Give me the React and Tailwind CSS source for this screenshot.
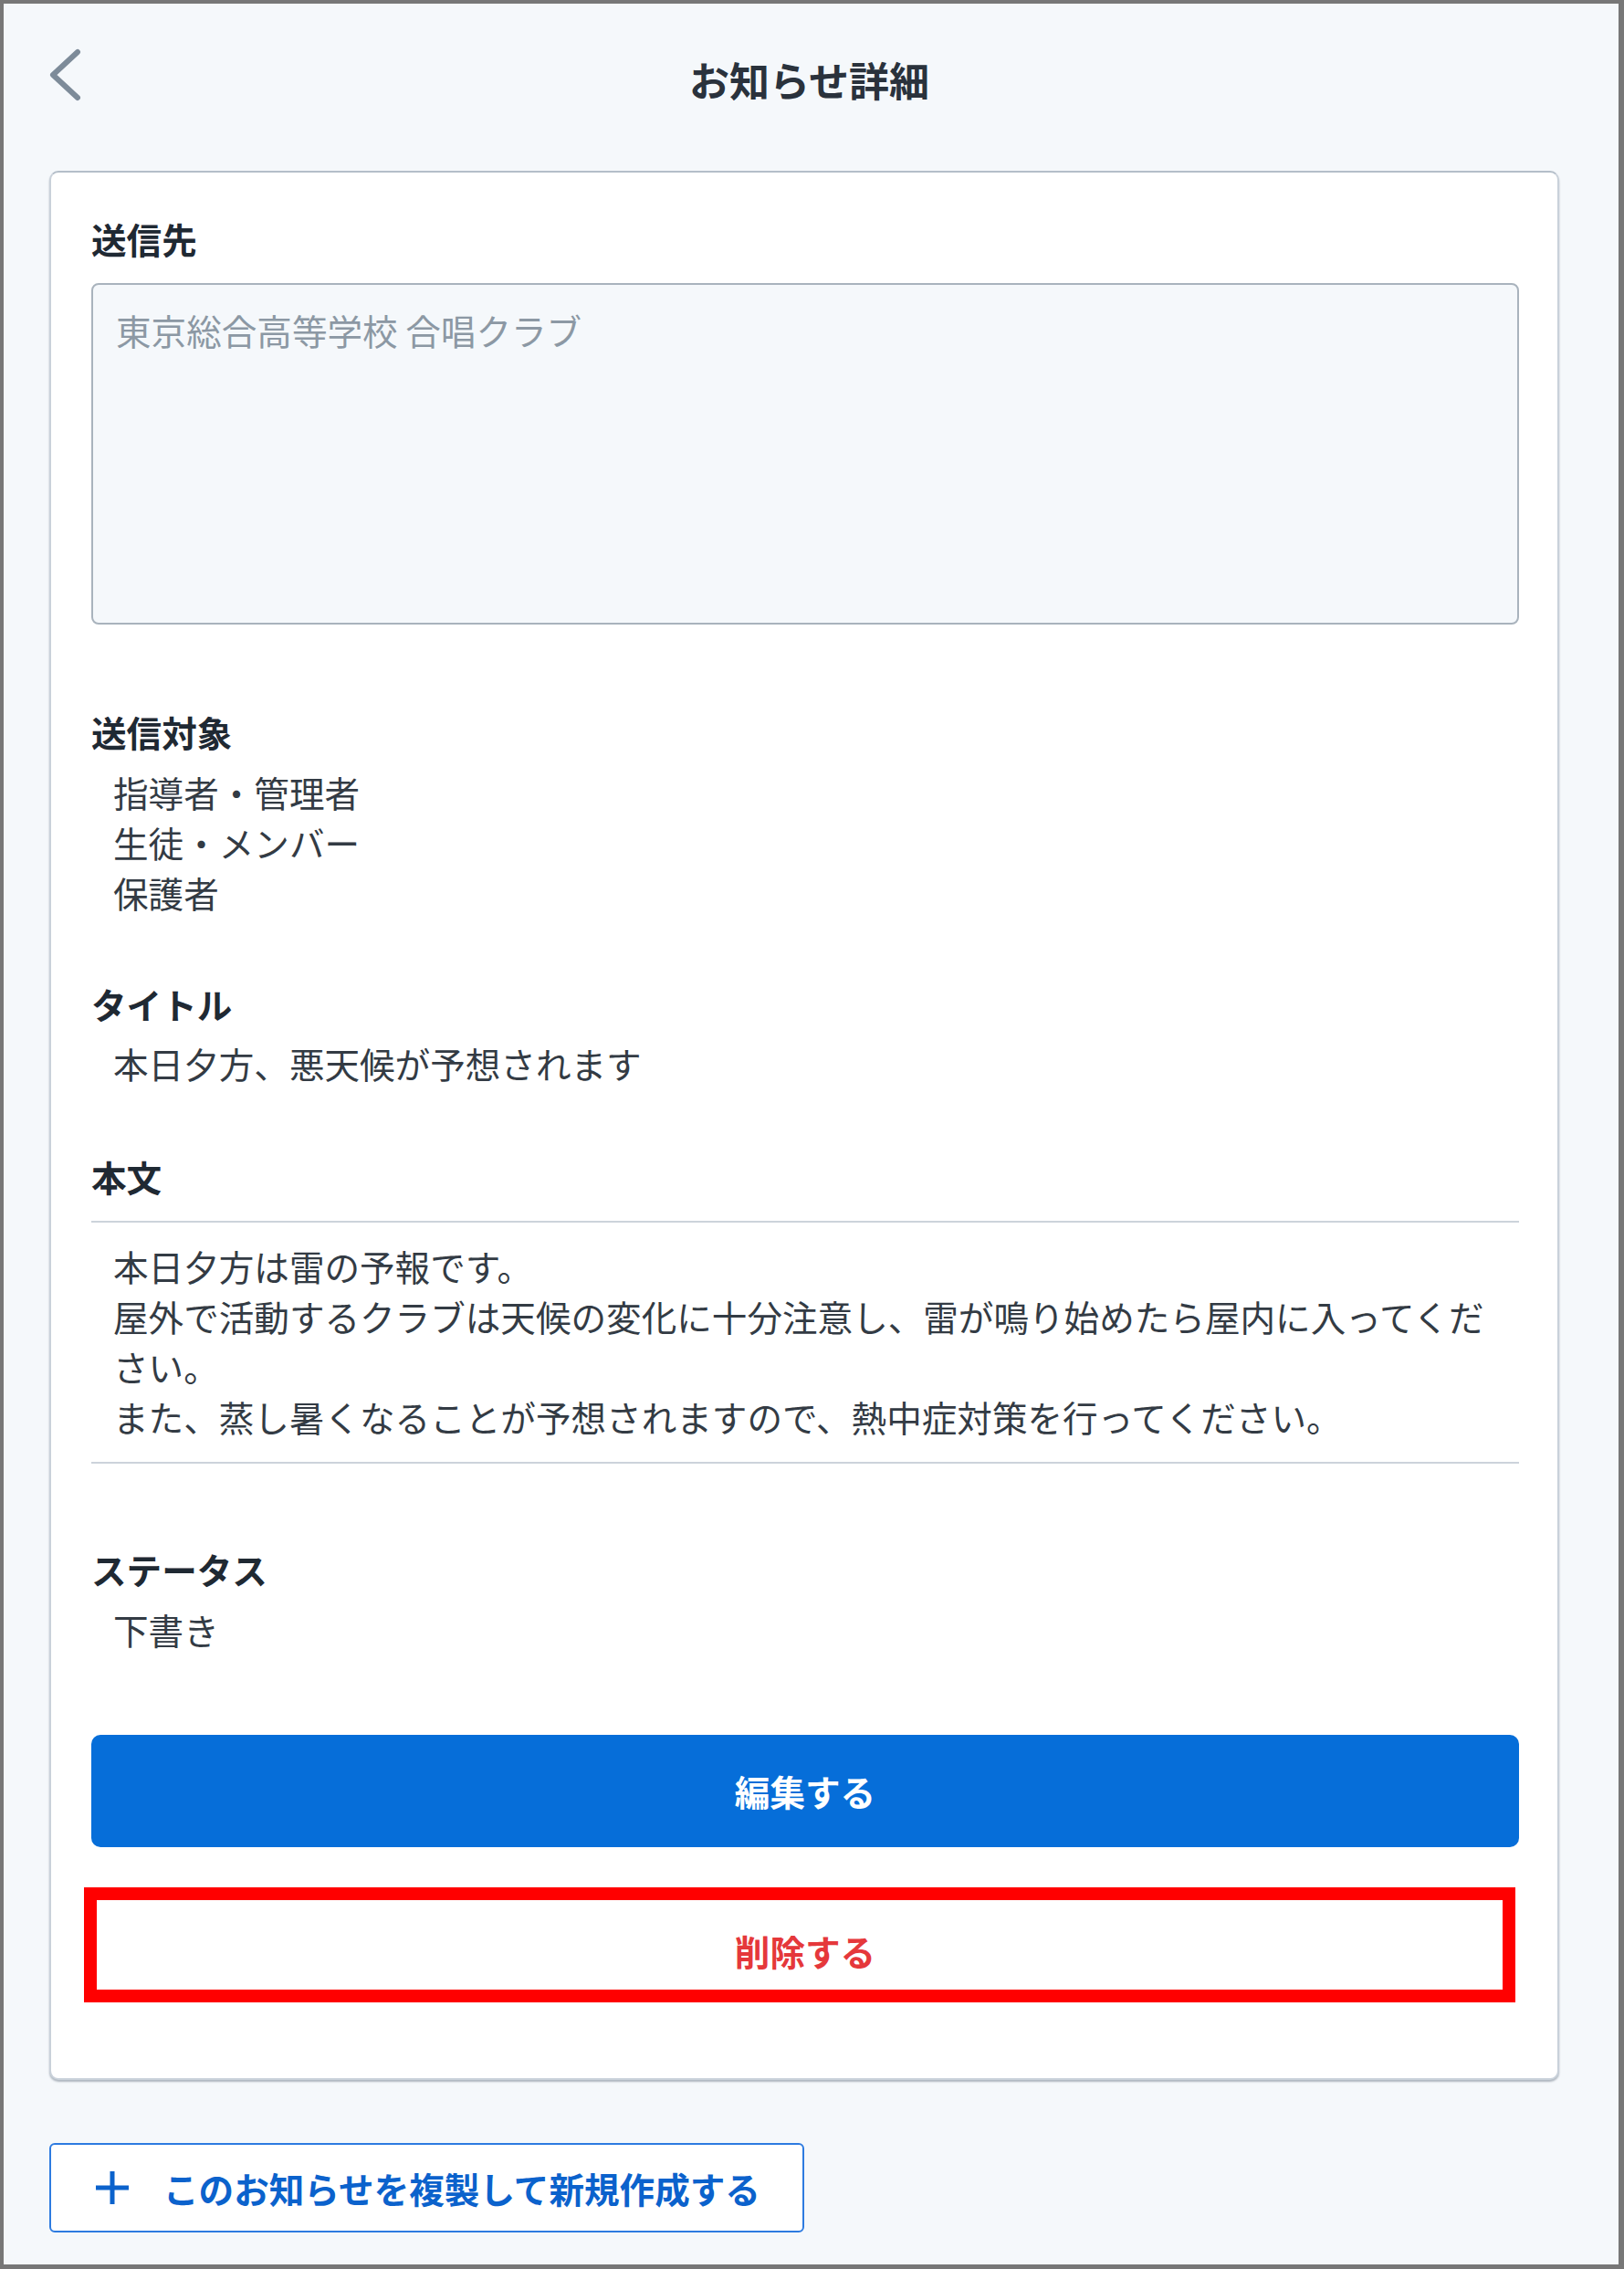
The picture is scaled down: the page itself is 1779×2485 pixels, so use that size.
const Label = ({ children, className = "" }) => (
  <div className={`text-[38.6px] leading-[55px] font-bold text-[#1f2933] ${className}`}>{children}</div>
);

const Value = ({ children, className = "" }) => (
  <div className={`pl-[24px] text-[38.6px] leading-[55px] text-[#333b44] ${className}`}>{children}</div>
);

export default function App() {
  return (
    <div
      className="w-[1779px] h-[2485px] box-border border-[4px] border-r-[6px] border-b-[5px] border-[#777777] bg-[#f5f8fb] flex flex-col"
      style={{ fontFamily: '"Noto Sans CJK JP", "Noto Sans", sans-serif' }}
    >
      {/* header */}
      <div className="h-[166px] grid grid-cols-[1fr_auto_1fr] items-center">
        <div className="pl-[49px] -mt-[10px]">
          <svg width="36" height="60" viewBox="0 0 36 60" fill="none">
            <polyline points="32,5 5,30 32,55" stroke="#7d8b99" strokeWidth="6" strokeLinecap="round" strokeLinejoin="round" />
          </svg>
        </div>
        <h1 className="text-[44px] font-bold text-[#2a323c] leading-none -ml-[4px]">お知らせ詳細</h1>
        <div />
      </div>

      {/* card */}
      <div className="mt-[17px] ml-[50px] w-[1654px] box-border bg-white border-2 border-[#c9d1da] border-t-[#b4bec9] rounded-[10px] shadow-[0_2px_2px_rgba(90,105,120,0.45)] pt-[45px] pb-[83px] pl-[44px] pr-[42px] flex flex-col">
        <Label>送信先</Label>
        <div className="mt-[21px] h-[374px] box-border border-2 border-[#a9b3bd] rounded-[8px] bg-[#f5f8fb] pl-[25px] pt-[22px] text-[38.6px] leading-[55px] text-[#8c98a4]">
          東京総合高等学校 合唱クラブ
        </div>

        <Label className="mt-[90px]">送信対象</Label>
        <div className="mt-[11px] flex flex-col">
          <Value>指導者・管理者</Value>
          <Value>生徒・メンバー</Value>
          <Value>保護者</Value>
        </div>

        <Label className="mt-[67px]">タイトル</Label>
        <Value className="mt-[10px]">本日夕方、悪天候が予想されます</Value>

        <Label className="mt-[69px]">本文</Label>
        <div className="mt-[21px] border-y-2 border-[#ccd3db] pt-[20px] pb-[22px]">
          <Value>本日夕方は雷の予報です。</Value>
          <Value>屋外で活動するクラブは天候の変化に十分注意し、雷が鳴り始めたら屋内に入ってくだ</Value>
          <Value>さい。</Value>
          <Value>また、蒸し暑くなることが予想されますので、熱中症対策を行ってください。</Value>
        </div>

        <Label className="mt-[88px]">ステータス</Label>
        <Value className="mt-[11px]">下書き</Value>

        <button className="mt-[88px] h-[123px] w-full rounded-[10px] bg-[#066ed9] text-white text-[38.6px] font-bold flex items-center justify-center">
          編集する
        </button>

        <button className="mt-[44px] -ml-[8px] w-[1568px] h-[126px] box-border border-[14px] border-[#ff0000] bg-white text-[#e5383b] text-[38.6px] font-bold flex items-center justify-center pt-[14px] pl-[12px]">
          削除する
        </button>
      </div>

      {/* copy button */}
      <button className="mt-[69px] ml-[50px] w-[827px] h-[98px] box-border border-2 border-[#2d7be0] rounded-[6px] bg-white flex items-center pl-[47px] gap-[36px] text-[#0b62cc] text-[38.6px] font-bold">
        <svg width="40" height="40" viewBox="0 0 40 40" className="shrink-0">
          <path d="M20 2 V38 M2 20 H38" stroke="#0b62cc" strokeWidth="5" />
        </svg>
        <span className="leading-none">このお知らせを複製して新規作成する</span>
      </button>
    </div>
  );
}
